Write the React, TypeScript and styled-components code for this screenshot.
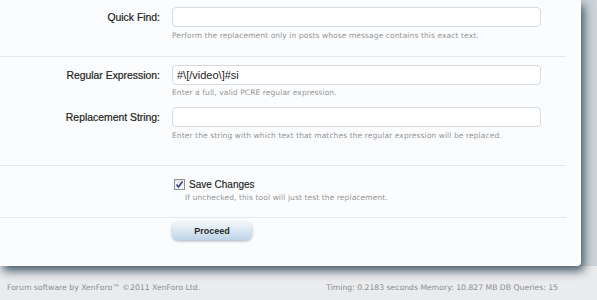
import React from "react";
import styled, { createGlobalStyle } from "styled-components";

const Global = createGlobalStyle`
  html, body { margin: 0; padding: 0; }
  body {
    width: 597px;
    height: 300px;
    overflow: hidden;
    background: #e9ebed;
    font-family: "Liberation Sans", Arial, sans-serif;
  }
`;

const Page = styled.div`
  display: flex;
  flex-direction: column;
  width: 597px;
  height: 300px;
`;

const Stage = styled.div`
  display: flex;
  background: linear-gradient(to right, #d9dfe3 0px, #cbd3d8 100%);
  height: 266px;
  position: relative;
  z-index: 1;
`;

const Panel = styled.div`
  width: 581px;
  height: 266px;
  background: #fbfcfd;
  border-bottom-right-radius: 4px;
  box-shadow: 3px 5px 10px rgba(45, 65, 80, 0.85);
  display: flex;
  flex-direction: column;
`;

const Section = styled.div<{ $pt: number; $pb: number }>`
  display: flex;
  flex-direction: column;
  gap: 8px;
  padding: ${(p) => p.$pt}px 0 ${(p) => p.$pb}px;
  margin-right: 15px;
  border-bottom: 1px solid #e3eaee;
`;

const Row = styled.div`
  display: grid;
  grid-template-columns: 160px 369px;
  column-gap: 12px;
`;

const Label = styled.label`
  height: 20px;
  display: flex;
  align-items: center;
  justify-content: flex-end;
  font-size: 10.4px;
  color: #222;
  -webkit-text-stroke: 0.2px #222;
`;

const Field = styled.div`
  display: flex;
  flex-direction: column;
`;

const Input = styled.div`
  box-sizing: border-box;
  height: 20px;
  border: 1px solid #d5dbe0;
  border-radius: 4px;
  background: #fff;
  font-size: 11px;
  color: #222;
  display: flex;
  align-items: center;
  padding-left: 4px;
`;

const Hint = styled.div<{ $mt?: number; $ml?: number }>`
  margin-top: ${(p) => p.$mt ?? 3}px;
  margin-left: ${(p) => p.$ml ?? 0}px;
  font-family: "DejaVu Sans", Verdana, sans-serif;
  font-size: 7.5px;
  line-height: 12px;
  color: #959595;
  letter-spacing: 0.1px;
`;

const CheckLine = styled.div`
  display: flex;
  align-items: center;
  gap: 4px;
  height: 14px;
  margin-left: 2px;
  font-size: 10px;
  color: #222;
  -webkit-text-stroke: 0.15px #222;
`;

const Box = styled.span`
  box-sizing: border-box;
  width: 11px;
  height: 11px;
  border: 1px solid #8a8f99;
  background: linear-gradient(#e6e8ec, #fafbfc);
  display: flex;
  align-items: center;
  justify-content: center;
`;

const Actions = styled.div`
  padding: 4px 0 0 172px;
`;

const Button = styled.div`
  box-sizing: border-box;
  width: 80px;
  height: 18px;
  border-radius: 6px;
  background: linear-gradient(#f2f6fa 0%, #d9e6f1 50%, #bcd2e6 100%);
  box-shadow: 0 1px 3px rgba(60, 80, 100, 0.45);
  display: flex;
  align-items: center;
  justify-content: center;
  font-size: 9px;
  font-weight: bold;
  color: #2a2a2a;
`;

const Footer = styled.div`
  flex: 1;
  display: flex;
  align-items: center;
  justify-content: space-between;
  padding: 9px 39px 0 7px;
  font-family: "DejaVu Sans", Verdana, sans-serif;
  font-size: 7.7px;
  color: #8c8e90;
  background: #e9ebed;
`;

export default function App() {
  return (
    <Page>
      <Global />
      <Stage>
        <Panel>
          <Section $pt={7} $pb={14}>
            <Row>
              <Label>Quick Find:</Label>
              <Field>
                <Input />
                <Hint>Perform the replacement only in posts whose message contains this exact text.</Hint>
              </Field>
            </Row>
          </Section>
          <Section $pt={8} $pb={23}>
            <Row>
              <Label>Regular Expression:</Label>
              <Field>
                <Input>#\[/video\]#si</Input>
                <Hint $mt={2}>Enter a full, valid PCRE regular expression.</Hint>
              </Field>
            </Row>
            <Row>
              <Label>Replacement String:</Label>
              <Field>
                <Input />
                <Hint>Enter the string with which text that matches the regular expression will be replaced.</Hint>
              </Field>
            </Row>
          </Section>
          <Section $pt={11} $pb={13}>
            <Row>
              <span />
              <Field>
                <CheckLine>
                  <Box>
                    <svg width="9" height="9" viewBox="0 0 9 9">
                      <path d="M1.5 4.5 L3.5 7 L7.5 1.5" fill="none" stroke="#3b3f8a" strokeWidth="1.6" />
                    </svg>
                  </Box>
                  Save Changes
                </CheckLine>
                <Hint $mt={1} $ml={13}>If unchecked, this tool will just test the replacement.</Hint>
              </Field>
            </Row>
          </Section>
          <Actions>
            <Button>Proceed</Button>
          </Actions>
        </Panel>
      </Stage>
      <Footer>
        <span>Forum software by XenForo™ ©2011 XenForo Ltd.</span>
        <span>Timing: 0.2183 seconds Memory: 10.827 MB DB Queries: 15</span>
      </Footer>
    </Page>
  );
}
